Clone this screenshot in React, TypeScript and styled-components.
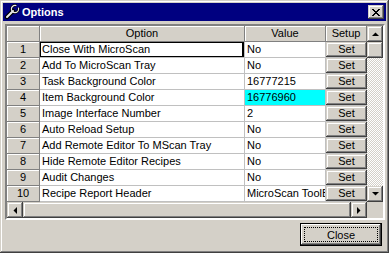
import React from "react";
import styled, { createGlobalStyle } from "styled-components";

const Global = createGlobalStyle`
  html, body { margin: 0; padding: 0; background: #d4d0c8; }
  body { font-family: "Liberation Sans", Arial, sans-serif; font-size: 11px; }
`;

const raised = `
  box-shadow: inset -1px -1px #404040, inset 1px 1px #d4d0c8,
    inset -2px -2px #808080, inset 2px 2px #ffffff;
`;

const Window = styled.div`
  width: 389px;
  height: 253px;
  box-sizing: border-box;
  padding: 3px;
  background: #d4d0c8;
  ${raised}
  display: flex;
  flex-direction: column;
`;

const TitleBar = styled.div`
  height: 18px;
  flex: none;
  background: #000080;
  display: flex;
  align-items: center;
  padding: 0 2px 0 1px;
  color: #fff;
  font-weight: bold;
  font-size: 11px;
`;

const TitleText = styled.span`
  margin-left: 2px;
  flex: 1;
  line-height: 18px;
`;

const CaptionButton = styled.div`
  width: 16px;
  height: 14px;
  background: #d4d0c8;
  ${raised}
  display: flex;
  align-items: center;
  justify-content: center;
`;

const GridFrame = styled.div`
  margin: 3px 1px 0 2px;
  height: 196px;
  box-sizing: border-box;
  flex: none;
  border: 2px solid;
  border-color: #808080 #ffffff #ffffff #808080;
  display: flex;
  flex-direction: column;
  position: relative;
  &::before {
    content: "";
    position: absolute;
    inset: 0;
    border: 1px solid;
    border-color: #404040 #d4d0c8 #d4d0c8 #404040;
    pointer-events: none;
    display: none;
  }
`;

const GridTop = styled.div`
  display: flex;
  height: 176px;
`;

const Table = styled.div`
  display: grid;
  grid-template-columns: 33px 205px 81px 41px;
  grid-auto-rows: 16px;
  background: #fff;
`;

const FixedCell = styled.div`
  background: #d4d0c8;
  box-sizing: border-box;
  border-right: 1px solid #808080;
  border-bottom: 1px solid #808080;
  box-shadow: inset 1px 1px #ffffff;
  display: flex;
  align-items: center;
  justify-content: center;
  line-height: 15px;
  color: #000;
  white-space: nowrap;
  overflow: hidden;
`;

const DataCell = styled.div<{ $bg?: string; $focus?: boolean }>`
  background: ${(p) => p.$bg || "#ffffff"};
  box-sizing: border-box;
  border-right: 1px solid #c0c0c0;
  border-bottom: 1px solid #c0c0c0;
  padding-left: 2px;
  line-height: 15px;
  white-space: nowrap;
  overflow: hidden;
  color: #000;
  ${(p) =>
    p.$focus
      ? `box-shadow: inset 1px 1px #000, inset -2px -1px #000;`
      : ""}
`;

const SetupCell = styled.div`
  box-sizing: border-box;
  border-bottom: 1px solid #c0c0c0;
  background: #d4d0c8;
  display: flex;
`;

const SetButton = styled.div`
  flex: 1;
  background: #d4d0c8;
  ${raised}
  display: flex;
  align-items: center;
  justify-content: center;
  line-height: 15px;
  color: #000;
`;

const VScroll = styled.div`
  width: 16px;
  display: flex;
  flex-direction: column;
`;

const HScroll = styled.div`
  height: 16px;
  display: flex;
`;

const ScrollButton = styled.div`
  width: 16px;
  height: 16px;
  flex: none;
  background: #d4d0c8;
  ${raised}
  display: flex;
  align-items: center;
  justify-content: center;
`;

const Thumb = styled.div<{ $grow?: boolean }>`
  background: #d4d0c8;
  ${raised}
  flex: ${(p) => (p.$grow ? "1" : "none")};
  height: 16px;
`;

const Track = styled.div`
  flex: 1;
  background-color: #d4d0c8;
  background-image: repeating-conic-gradient(#ffffff 0 25%, #d4d0c8 0 50%);
  background-size: 2px 2px;
`;

const Corner = styled.div`
  width: 16px;
  height: 16px;
  background: #d4d0c8;
`;

const Footer = styled.div`
  display: flex;
  justify-content: flex-end;
  padding: 3px 4px 0 0;
`;

const CloseButton = styled.div`
  width: 82px;
  height: 23px;
  box-sizing: border-box;
  border: 1px solid #000;
  background: #d4d0c8;
  box-shadow: inset -1px -1px #404040, inset 1px 1px #ffffff,
    inset -2px -2px #808080;
  display: flex;
  align-items: center;
  justify-content: center;
  padding: 3px;
`;

const FocusRect = styled.div`
  flex: 1;
  align-self: stretch;
  border: 1px dotted #000;
  display: flex;
  align-items: center;
  justify-content: center;
  color: #000;
  font-size: 11px;
`;

const Arrow = ({ dir }: { dir: "up" | "down" | "left" | "right" }) => {
  const pts: Record<string, string> = {
    up: "0,4 7,4 3.5,0.5",
    down: "0,0 7,0 3.5,3.5",
    left: "4,0 4,7 0.5,3.5",
    right: "0,0 0,7 3.5,3.5",
  };
  const horiz = dir === "left" || dir === "right";
  return (
    <svg width={horiz ? 4 : 7} height={horiz ? 7 : 4} viewBox={horiz ? "0 0 4 7" : "0 0 7 4"}>
      <polygon points={pts[dir]} fill="#000" />
    </svg>
  );
};

const Wrench = () => (
  <svg width="16" height="16" viewBox="0 0 16 16">
    <g strokeLinecap="round" fill="none">
      <line x1="3" y1="13" x2="9" y2="7" stroke="#000" strokeWidth="4.5" />
      <circle cx="11" cy="5" r="3.6" stroke="#000" strokeWidth="2.6" />
      <line x1="3" y1="13" x2="9" y2="7" stroke="#e8e8e8" strokeWidth="2" />
      <circle cx="11" cy="5" r="3.6" stroke="#e8e8e8" strokeWidth="1.2" />
    </g>
    <polygon points="11,5 13,0 16,0 16,3" fill="#000080" />
  </svg>
);

const XGlyph = () => (
  <svg width="8" height="7" viewBox="0 0 8 7" shapeRendering="crispEdges">
    <path
      d="M0 0h2v1h-2zM6 0h2v1h-2zM1 1h2v1h-2zM5 1h2v1h-2zM2 2h4v1h-4zM3 3h2v1h-2zM2 4h4v1h-4zM1 5h2v1h-2zM5 5h2v1h-2zM0 6h2v1h-2zM6 6h2v1h-2z"
      fill="#000"
    />
  </svg>
);

const rows: { option: string; value: string; bg?: string }[] = [
  { option: "Close With MicroScan", value: "No" },
  { option: "Add To MicroScan Tray", value: "No" },
  { option: "Task Background Color", value: "16777215" },
  { option: "Item Background Color", value: "16776960", bg: "#00ffff" },
  { option: "Image Interface Number", value: "2" },
  { option: "Auto Reload Setup", value: "No" },
  { option: "Add Remote Editor To MScan Tray", value: "No" },
  { option: "Hide Remote Editor Recipes", value: "No" },
  { option: "Audit Changes", value: "No" },
  { option: "Recipe Report Header", value: "MicroScan ToolBox" },
];

export default function App() {
  return (
    <>
      <Global />
      <Window>
        <TitleBar>
          <Wrench />
          <TitleText>Options</TitleText>
          <CaptionButton>
            <XGlyph />
          </CaptionButton>
        </TitleBar>
        <GridFrame>
          <GridTop>
            <Table>
              <FixedCell />
              <FixedCell>Option</FixedCell>
              <FixedCell>Value</FixedCell>
              <FixedCell>Setup</FixedCell>
              {rows.map((r, i) => (
                <React.Fragment key={i}>
                  <FixedCell>{i + 1}</FixedCell>
                  <DataCell $focus={i === 0}>{r.option}</DataCell>
                  <DataCell $bg={r.bg}>{r.value}</DataCell>
                  <SetupCell>
                    <SetButton>Set</SetButton>
                  </SetupCell>
                </React.Fragment>
              ))}
            </Table>
            <VScroll>
              <ScrollButton>
                <Arrow dir="up" />
              </ScrollButton>
              <Thumb />
              <Track />
              <ScrollButton>
                <Arrow dir="down" />
              </ScrollButton>
            </VScroll>
          </GridTop>
          <HScroll>
            <ScrollButton>
              <Arrow dir="left" />
            </ScrollButton>
            <Thumb $grow />
            <ScrollButton>
              <Arrow dir="right" />
            </ScrollButton>
            <Corner />
          </HScroll>
        </GridFrame>
        <Footer>
          <CloseButton>
            <FocusRect>Close</FocusRect>
          </CloseButton>
        </Footer>
      </Window>
    </>
  );
}
